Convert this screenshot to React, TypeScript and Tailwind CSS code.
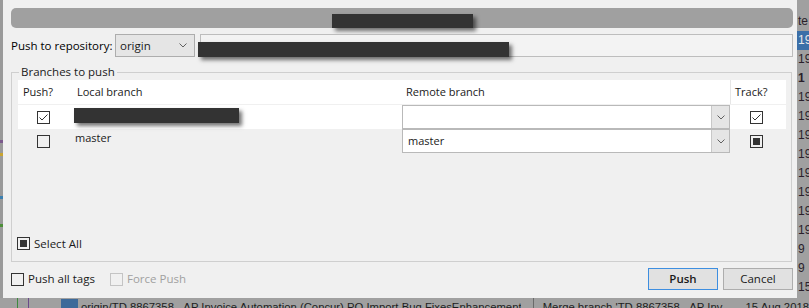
import React from "react";

type CheckState = "on" | "off" | "mixed";

function CheckBox({ state, disabled }: { state: CheckState; disabled?: boolean }) {
  return (
    <span
      className={`flex h-[13px] w-[13px] shrink-0 items-center justify-center border ${
        disabled ? "border-[#c4c4c4]" : "border-[#333333]"
      }`}
    >
      {state === "on" && (
        <svg width="11" height="11" viewBox="0 0 11 11" fill="none">
          <path d="M1.5 5.5 L4 8 L9.5 2.5" stroke="#333333" strokeWidth="1" />
        </svg>
      )}
      {state === "mixed" && <span className="h-[7px] w-[7px] bg-[#333333]" />}
    </span>
  );
}

function Chevron() {
  return (
    <svg width="8" height="5" viewBox="0 0 8 5" fill="none">
      <path d="M0.5 0.5 L4 4 L7.5 0.5" stroke="#606060" strokeWidth="1" />
    </svg>
  );
}

function Redacted({ className }: { className: string }) {
  return <span className={`block bg-[#333333] shadow-[3px_3px_4px_rgba(0,0,0,0.55)] ${className}`} />;
}

function RemoteCombo({ value }: { value: string }) {
  return (
    <div className="flex h-[24px] border border-[#b9b9b9] bg-white">
      <span className="flex-1 pl-[5px] leading-[22px]">{value}</span>
      <span className="flex w-[18px] items-center justify-center border-l border-[#c8c8c8] bg-[#e5e5e5]">
        <Chevron />
      </span>
    </div>
  );
}

const sideRows = ["te", "19", "19", "1", "19", "19", "19", "19", "19", "19", "19", "19", "9", "9", "15"];

export default function App() {
  return (
    <div className="flex h-[308px] w-[809px] flex-col overflow-hidden bg-[#a0a0a0] font-['Open_Sans',sans-serif] text-[11px] text-[#1a1a1a]">
      <div className="flex h-[298px]">
        {/* app behind, left edge */}
        <div className="flex w-[3px] flex-col bg-[#9a9a9a]">
          <span className="mt-[140px] h-[3px] bg-[#7b5a8c]" />
          <span className="mt-[10px] h-[3px] bg-[#c9a431]" />
          <span className="mt-[40px] h-[3px] bg-[#3b7fb0]" />
          <span className="mt-[25px] h-[3px] bg-[#4d8f3a]" />
        </div>

        {/* dialog */}
        <div className="flex w-[794px] flex-col bg-[#f0f0f0] pl-[8px] pr-[4px] pt-[8px]">
          <div className="flex h-[20px] items-end justify-center rounded-[5px] bg-[#a0a0a0]">
            <Redacted className="h-[14px] w-[141px]" />
          </div>

          <div className="mt-[6px] flex h-[23px] items-center">
            <span className="w-[104px] shrink-0 text-[11.5px] text-[#000]">Push to repository:</span>
            <div className="flex h-[23px] w-[80px] shrink-0 items-center justify-between border border-[#adadad] bg-[#e5e5e5] pl-[4px] pr-[7px]">
              <span className="text-[11.5px]">origin</span>
              <Chevron />
            </div>
            <div className="relative ml-[5px] h-[23px] flex-1 border border-[#bdbdbd] bg-[#f3f3f3]">
              <Redacted className="absolute left-[-3px] top-[7px] h-[15px] w-[311px]" />
            </div>
          </div>

          {/* Branches to push */}
          <div className="relative mt-[15px] mr-[1px] flex h-[190px] flex-col border border-[#cfcfcf] pl-[6px] pr-[5px] pt-[7px]">
            <span className="absolute left-[7px] top-[-9px] bg-[#f0f0f0] px-[2px] text-[11.5px] leading-[16px]">
              Branches to push
            </span>

            <div className="grid grid-cols-[56px_328px_328px_56px]">
              <div className="col-span-4 grid h-[25px] grid-cols-[56px_328px_328px_56px] items-center border-b border-[#f0f0f0] bg-white">
                <span className="pl-[5px]">Push?</span>
                <span className="pl-[3px]">Local branch</span>
                <span className="pl-[4px]">Remote branch</span>
                <span className="flex h-full items-center border-l border-[#e6e6e6] pl-[4px]">Track?</span>
              </div>

              <div className="col-span-4 grid h-[24px] grid-cols-[56px_328px_328px_56px] bg-white">
                <span className="flex items-center pl-[19px]">
                  <CheckBox state="on" />
                </span>
                <span className="pt-[3px]">
                  <Redacted className="h-[15px] w-[165px]" />
                </span>
                <RemoteCombo value="" />
                <span className="flex items-center pl-[20px]">
                  <CheckBox state="on" />
                </span>
              </div>

              <div className="col-span-4 grid h-[24px] grid-cols-[56px_328px_328px_56px]">
                <span className="flex items-center pl-[19px]">
                  <CheckBox state="off" />
                </span>
                <span className="pl-[1px] pt-[1px] leading-[16px]">master</span>
                <RemoteCombo value="master" />
                <span className="flex items-center pl-[20px]">
                  <CheckBox state="mixed" />
                </span>
              </div>
            </div>

            <div className="flex-1" />

            <div className="mb-[9px] flex items-center gap-[4px]">
              <span className="-ml-[1px]">
                <CheckBox state="mixed" />
              </span>
              <span className="text-[11.5px]">Select All</span>
            </div>
          </div>

          <div className="mt-[6px] flex h-[22px] items-center text-[11.5px]">
            <CheckBox state="off" />
            <span className="ml-[4px] w-[82px]">Push all tags</span>
            <CheckBox state="off" disabled />
            <span className="ml-[4px] text-[#a0a0a0]">Force Push</span>
            <div className="flex-1" />
            <button className="h-[22px] w-[70px] border border-[#3d8ee0] bg-[#e1e1e1] font-semibold">Push</button>
            <button className="ml-[5px] h-[22px] w-[70px] border border-[#adadad] bg-[#e1e1e1]">Cancel</button>
          </div>
        </div>

        {/* app behind, right edge */}
        <div className="flex flex-1 flex-col overflow-hidden bg-[#a0a0a0] pt-[12px] font-['Liberation_Sans',sans-serif] text-[12px] leading-[19px]">
          {sideRows.map((t, i) => (
            <span
              key={i}
              className={`whitespace-nowrap pl-[1px] ${i === 1 ? "bg-[#3b6fa8] text-[#e8e8e8]" : "text-[#2a1f2a]"} ${
                i === 3 ? "font-bold" : ""
              }`}
            >
              {t}
            </span>
          ))}
        </div>
      </div>

      {/* app behind, bottom */}
      <div className="flex h-[10px] items-start overflow-hidden bg-[#a0a0a0] font-['Liberation_Sans',sans-serif] text-[11.3px] leading-[16px] text-[#1e1e1e]">
        <span className="ml-[17px] h-full w-[1px] bg-[#3e8a3e]" />
        <span className="ml-[10px] h-full w-[1px] bg-[#6b4a8a]" />
        <span className="ml-[32px] mt-[1px] h-full w-[17px] bg-[#3d6a9a]" />
        <span className="ml-[3px] w-[440px] overflow-hidden whitespace-nowrap pt-[1px]">
          origin/TD 8867358 - AP Invoice Automation (Concur) PO Import Bug FixesEnhancement
        </span>
        <span className="ml-[12px] h-full w-[1px] bg-[#6a6a6a]" />
        <span className="ml-[9px] w-[203px] overflow-hidden whitespace-nowrap pt-[1px]">Merge branch 'TD 8867358 - AP Inv...</span>
        <span className="whitespace-nowrap pt-[1px]">15 Aug 2018</span>
      </div>
    </div>
  );
}
